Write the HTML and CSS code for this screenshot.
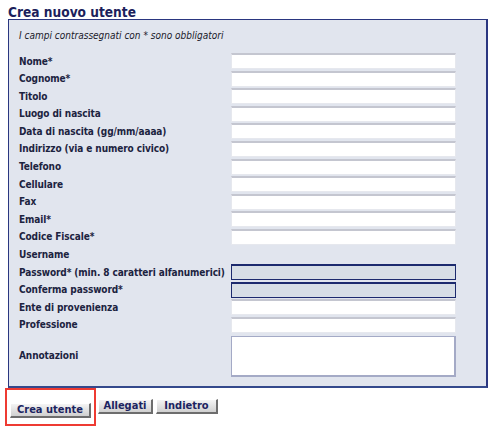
FILE: index.html
```html
<!DOCTYPE html>
<html lang="it">
<head>
    <meta charset="UTF-8">
    <title>Crea nuovo utente</title>
    <link rel="stylesheet" href="styles.css">
</head>
<body>
  <h1 class="page-title">Crea nuovo utente</h1>
  <form class="user-form">
    <div class="form-box">
      <p class="note">I campi contrassegnati con * sono obbligatori</p>
      <div class="fields">
        <label>Nome*</label><input type="text">
        <label>Cognome*</label><input type="text">
        <label>Titolo</label><input type="text">
        <label>Luogo di nascita</label><input type="text">
        <label>Data di nascita (gg/mm/aaaa)</label><input type="text">
        <label>Indirizzo (via e numero civico)</label><input type="text">
        <label>Telefono</label><input type="text">
        <label>Cellulare</label><input type="text">
        <label>Fax</label><input type="text">
        <label>Email*</label><input type="text">
        <label>Codice Fiscale*</label><input type="text">
        <label>Username</label><span></span>
        <label>Password* (min. 8 caratteri alfanumerici)</label><input type="password" class="pwd">
        <label>Conferma password*</label><input type="password" class="pwd">
        <label>Ente di provenienza</label><input type="text">
        <label>Professione</label><input type="text">
        <label>Annotazioni</label><textarea></textarea>
      </div>
    </div>
    <div class="buttons">
      <span class="highlight"><button type="button" class="btn-create">Crea utente</button></span>
      <button type="button" class="btn-attach">Allegati</button>
      <button type="button" class="btn-back">Indietro</button>
    </div>
  </form>
</body>
</html>
```

FILE: styles.css
```css
* {
  font-family: "DejaVu Sans Condensed", "DejaVu Sans", sans-serif;
  box-sizing: border-box;
}

body {
  margin: 0;
  padding: 0 8px;
  background-color: #fff;
}

.page-title {
  margin: 0;
  padding-top: 4px;
  height: 19px;
  font-size: 13.6px;
  line-height: 16px;
  color: #1c1f5c;
}

.user-form {
  margin: 0;
}

.form-box {
  width: 480px;
  background-color: #e1e5ee;
  border: 1px solid #2a3680;
  border-right-width: 2px;
  border-bottom: 2px solid #34498c;
  padding: 9px 30px 9px 10px;
}

.note {
  margin: 0;
  font-size: 10px;
  font-style: italic;
  color: #1a1a2a;
  line-height: 14px;
}

.fields {
  display: grid;
  grid-template-columns: 212px 225px;
  grid-auto-rows: minmax(16px, auto);
  row-gap: 1.6px;
  margin-top: 10px;
  align-items: center;
}

.fields label {
  font-size: 10px;
  font-weight: bold;
  color: #1c2340;
  letter-spacing: -0.1px;
  white-space: nowrap;
}

.fields input {
  height: 16px;
  width: 225px;
  margin: 0;
  background-color: #fff;
  border: 1px solid #e6e8ee;
  border-top: 2px solid #c4c6d0;
}

.fields input.pwd {
  background-color: #d7dee6;
  border: 1px solid #1c2a6e;
  border-top-width: 2px;
}

.fields textarea {
  display: block;
  height: 41px;
  width: 225px;
  margin-top: 1px;
  resize: none;
  background-color: #fff;
  border: 1px solid #a4aac6;
  border-right-width: 2px;
  border-bottom-width: 2px;
}

.buttons {
  display: flex;
  align-items: center;
  margin-top: 0;
  margin-left: -3px;
}

.highlight {
  display: inline-block;
  border: 2px solid #ee3b32;
  padding: 8px 3px 6px 3px;
  margin-right: 2px;
}

.buttons button {
  height: 15px;
  padding: 0;
  margin: 0 3px 0 0;
  font-size: 11px;
  font-weight: bold;
  color: #1c2460;
  line-height: 12px;
  white-space: nowrap;
  background: linear-gradient(#f4f4f4, #d0d0d0);
  border: 1px solid #fff;
  border-right: 2px solid #6d6d6d;
  border-bottom: 2px solid #6d6d6d;
}

.btn-create {
  width: 81px;
}

.buttons .btn-create {
  margin-right: 0;
}

.btn-attach {
  width: 55px;
}

.btn-back {
  width: 62px;
}
```
